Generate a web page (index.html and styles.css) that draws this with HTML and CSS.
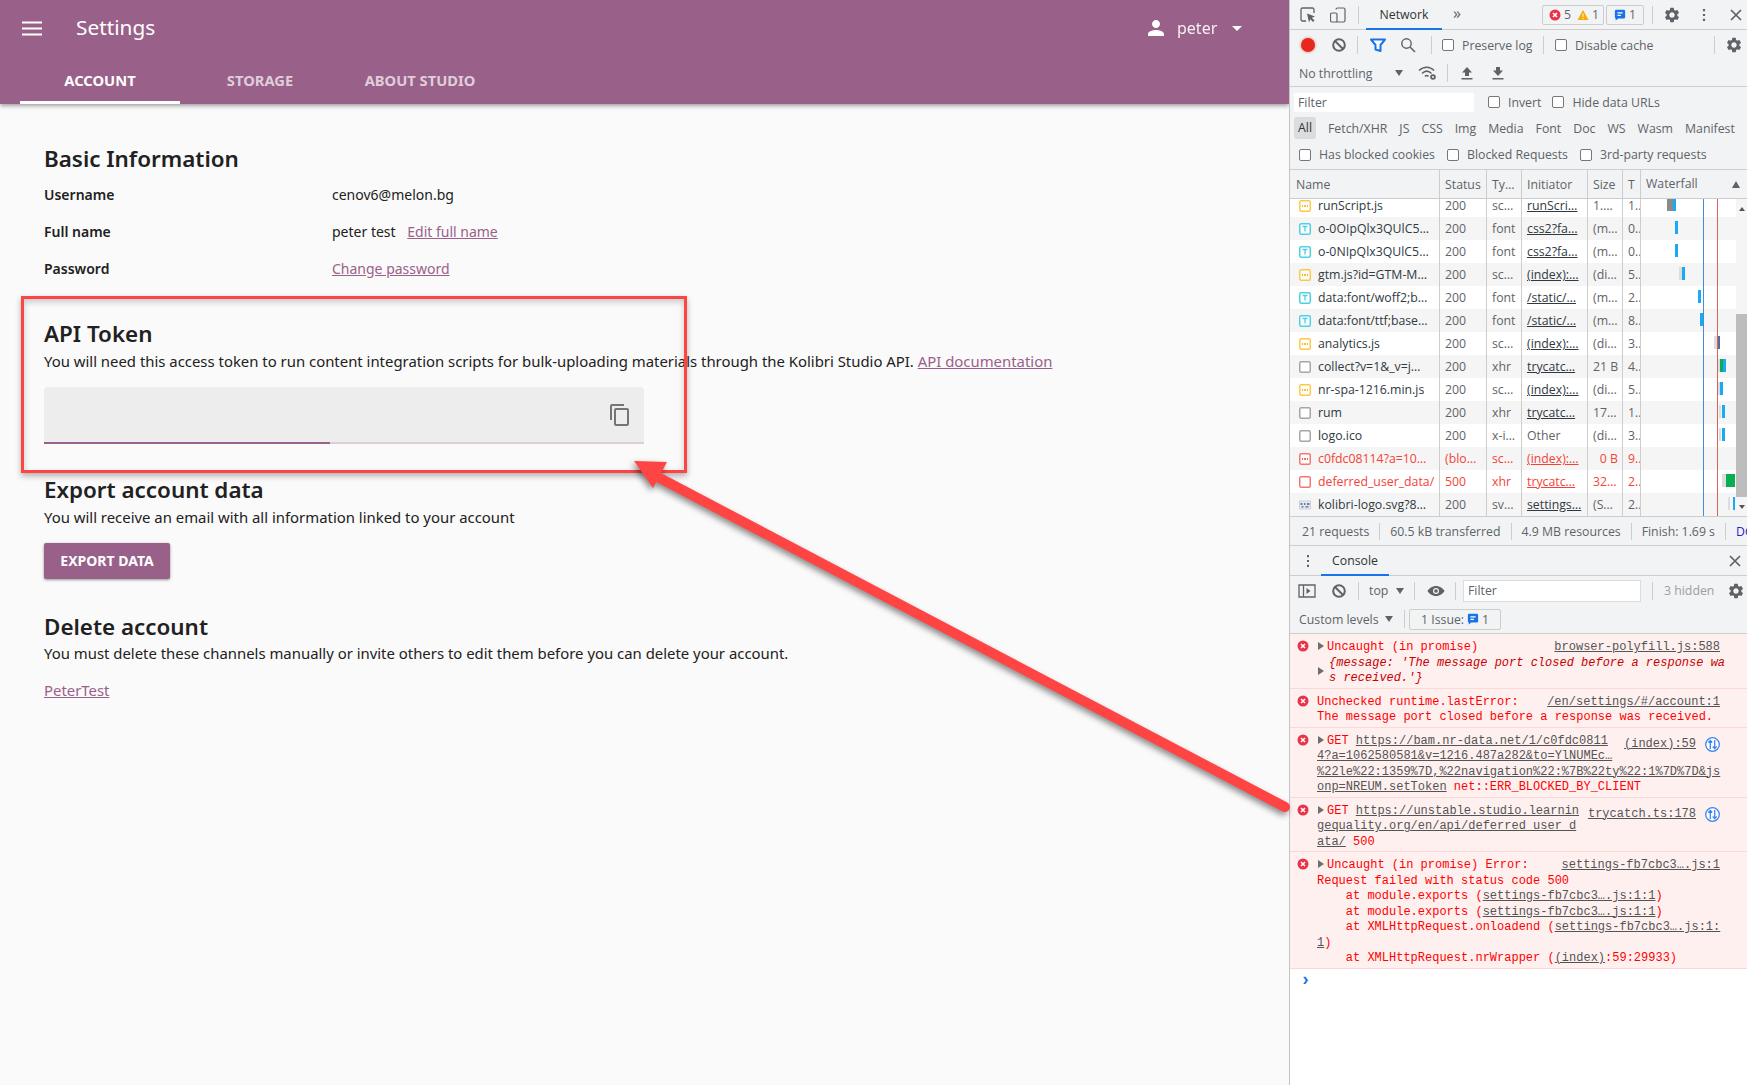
FILE: index.html
```html
<!DOCTYPE html>
<html lang="en">
<head>
    <meta charset="UTF-8">
    <meta name="viewport" content="width=device-width, initial-scale=1.0">
    <title>Settings</title>
    <link rel="stylesheet" href="styles.css">
</head>
<body>
    <svg class="defs" width="0" height="0">
        <symbol id="gear" viewBox="0 0 24 24"><path d="M19.14 12.94c.04-.3.06-.61.06-.94 0-.32-.02-.64-.07-.94l2.03-1.58c.18-.14.23-.41.12-.61l-1.92-3.32c-.12-.22-.37-.29-.59-.22l-2.39.96c-.5-.38-1.03-.7-1.62-.94l-.36-2.54c-.04-.24-.24-.41-.48-.41h-3.84c-.24 0-.43.17-.47.41l-.36 2.54c-.59.24-1.13.57-1.62.94l-2.39-.96c-.22-.08-.47 0-.59.22L2.74 8.87c-.12.21-.08.47.12.61l2.03 1.58c-.05.3-.09.63-.09.94s.02.64.07.94l-2.03 1.58c-.18.14-.23.41-.12.61l1.92 3.32c.12.22.37.29.59.22l2.39-.96c.5.38 1.03.7 1.62.94l.36 2.54c.05.24.24.41.48.41h3.84c.24 0 .44-.17.47-.41l.36-2.54c.59-.24 1.13-.56 1.62-.94l2.39.96c.22.08.47 0 .59-.22l1.92-3.32c.12-.22.07-.47-.12-.61l-2.01-1.58zM12 15.6c-1.98 0-3.6-1.62-3.6-3.6s1.62-3.6 3.6-3.6 3.6 1.62 3.6 3.6-1.62 3.6-3.6 3.6z"/></symbol>
        <symbol id="block" viewBox="0 0 16 16"><circle cx="8" cy="8" r="5.8" fill="none" stroke="currentColor" stroke-width="2"/><path d="M4 4l8 8" stroke="currentColor" stroke-width="2"/></symbol>
        <symbol id="err" viewBox="0 0 12 12"><circle cx="6" cy="6" r="5.5" fill="#e8344a"/><path d="M4 4l4 4M8 4l-4 4" stroke="#fff" stroke-width="1.5"/></symbol>
        <symbol id="msgicon" viewBox="0 0 14 14"><path d="M2.5 1h9A1.5 1.5 0 0 1 13 2.5v7a1.5 1.5 0 0 1-1.500 1.500H5l-3 2.500V11A1.500 1.500 0 0 1 1 9.500v-7A1.500 1.500 0 0 1 2.500 1z" fill="#1a73e8"/><path d="M4 4.500h6M4 7.500h4" stroke="#fff" stroke-width="1.300"/></symbol>
        <symbol id="font" viewBox="0 0 12 12"><rect x=".75" y=".75" width="10.500" height="10.500" rx="1.500" fill="#fff" stroke="#4dd0e8" stroke-width="1.500"/><path d="M3.500 3.500h5M6 3.500v5" stroke="#4dd0e8" stroke-width="1.300"/></symbol>
        <symbol id="script" viewBox="0 0 12 12"><rect x=".75" y=".75" width="10.500" height="10.500" rx="1.500" fill="#fff" stroke="#fbc944" stroke-width="1.500"/><path d="M3 7l1-1-1-1M9 7L8 6l1-1" fill="none" stroke="#f6a800" stroke-width=".9"/><circle cx="6" cy="6" r="1" fill="#f6a800"/></symbol>
        <symbol id="doc" viewBox="0 0 12 12"><rect x=".75" y=".75" width="10.500" height="10.500" rx="1.500" fill="#fff" stroke="#a3a6aa" stroke-width="1.500"/></symbol>
        <symbol id="script-red" viewBox="0 0 12 12"><rect x=".75" y=".75" width="10.500" height="10.500" rx="1.500" fill="#fff" stroke="#f7776c" stroke-width="1.500"/><path d="M3 7l1-1-1-1M9 7L8 6l1-1" fill="none" stroke="#ee4433" stroke-width=".9"/><circle cx="6" cy="6" r="1" fill="#ee4433"/></symbol>
        <symbol id="doc-red" viewBox="0 0 12 12"><rect x=".75" y=".75" width="10.500" height="10.500" rx="1.500" fill="#fff" stroke="#f7776c" stroke-width="1.500"/></symbol>
        <symbol id="image" viewBox="0 0 12 12"><rect x=".5" y="2" width="11" height="8" fill="#e4e8f0" stroke="#b9c0cc" stroke-width=".6"/><path d="M1.500 4h2v2h-2zM5 4h1.500v2H5zM8 4h2.500v2H8zM2.500 7h2v1.500h-2zM6.500 7h3v1.500h-3z" fill="#6f7f9d"/></symbol>
        <symbol id="net" viewBox="0 0 15 15"><circle cx="7.500" cy="7.500" r="6.800" fill="#fff" stroke="#3d86f0" stroke-width="1.300"/><path d="M5.300 12V3.500M3.300 5.500l2-2 2 2M9.700 3v8.500M7.700 9.500l2 2 2-2" fill="none" stroke="#3d86f0" stroke-width="1.300"/></symbol>
    </svg>

    <div class="screen">
        <div class="page">
            <header class="appbar">
                <div class="toolbar">
                    <svg class="hamburger" viewBox="0 0 20 15"><path d="M0 1.500h20M0 7.500h20M0 13.500h20" stroke="#fff" stroke-width="2"/></svg>
                    <span class="app-title">Settings</span>
                    <div class="user">
                        <svg class="user-icon" viewBox="0 0 24 24"><path d="M12 12c2.210 0 4-1.790 4-4s-1.790-4-4-4-4 1.790-4 4 1.790 4 4 4zm0 2c-2.670 0-8 1.340-8 4v2h16v-2c0-2.660-5.330-4-8-4z" fill="#fff"/></svg>
                        <span class="user-name">peter</span>
                        <span class="user-caret"></span>
                    </div>
                </div>
                <nav class="tabs">
                    <a class="tab tab-active">ACCOUNT</a>
                    <a class="tab">STORAGE</a>
                    <a class="tab">ABOUT STUDIO</a>
                </nav>
            </header>

            <main class="content">
                <h2 class="first-heading">Basic Information</h2>
                <div class="info-row first-row"><b>Username</b><span>cenov6@melon.bg</span></div>
                <div class="info-row"><b>Full name</b><span>peter test <a class="link edit-link">Edit full name</a></span></div>
                <div class="info-row"><b>Password</b><a class="link">Change password</a></div>

                <h2 class="api-heading">API Token</h2>
                <p>You will need this access token to run content integration scripts for bulk-uploading materials through the Kolibri Studio API. <a class="link">API documentation</a></p>
                <div class="token-field">
                    <svg class="copy-icon" viewBox="0 0 24 24"><path d="M16 1H4c-1.100 0-2 .9-2 2v14h2V3h12V1zm3 4H8c-1.100 0-2 .9-2 2v14c0 1.100.9 2 2 2h11c1.100 0 2-.9 2-2V7c0-1.100-.9-2-2-2zm0 16H8V7h11v14z" fill="#757575"/></svg>
                    <div class="token-progress"><div class="token-bar"></div></div>
                </div>

                <h2 class="export-heading">Export account data</h2>
                <p>You will receive an email with all information linked to your account</p>
                <button class="export-btn">EXPORT DATA</button>

                <h2 class="delete-heading">Delete account</h2>
                <p>You must delete these channels manually or invite others to edit them before you can delete your account.</p>
                <p class="channel"><a class="link">PeterTest</a></p>
            </main>
        </div>

        <aside class="devtools">
            <div class="dt-row dt-top">
                <svg class="ic16 ic-inspect" viewBox="0 0 16 16"><path d="M6 14H2.500A1.500 1.500 0 0 1 1 12.500v-10A1.500 1.500 0 0 1 2.500 1h10A1.500 1.500 0 0 1 14 2.500V6" fill="none" stroke="#5f6368" stroke-width="1.300"/><path d="M7 6.500l8 3-3.200 1.300 2.700 2.700-1.500 1.500-2.700-2.700L9 15.500z" fill="#5f6368"/></svg>
                <svg class="ic16 ic-device" viewBox="0 0 16 16"><path d="M6 2.500A1.500 1.500 0 0 1 7.500 1h6A1.500 1.500 0 0 1 15 2.500v11a1.500 1.500 0 0 1-1.500 1.500H2A1.500 1.500 0 0 1 .5 13.500v-6A1.500 1.500 0 0 1 2 6h3.500a1.500 1.500 0 0 1 1.500 1.500v6A1.500 1.500 0 0 1 5.500 15" fill="none" stroke="#5f6368" stroke-width="1.200"/></svg>
                <i class="sep sep-a"></i>
                <span class="dt-tab">Network</span>
                <span class="more">»</span>
                <span class="badge badge-err"><svg class="ic12" viewBox="0 0 12 12"><use href="#err"/></svg>5 <svg class="ic12 warn" viewBox="0 0 12 12"><path d="M6 1l5.500 10H.5z" fill="#f9ab00"/><path d="M6 4.500v3.500M6 9v1" stroke="#fff" stroke-width="1"/></svg>1</span>
                <span class="badge badge-msg"><svg class="ic12" viewBox="0 0 14 14"><use href="#msgicon"/></svg>1</span>
                <i class="sep sep-b"></i>
                <svg class="ic16 gear gear-top" viewBox="0 0 24 24"><use href="#gear"/></svg>
                <svg class="ic16 ic-dots" viewBox="0 0 16 16"><path d="M8 2v2.200M8 6.900v2.200M8 11.800V14" stroke="#5f6368" stroke-width="2.200"/></svg>
                <svg class="ic16 ic-close" viewBox="0 0 16 16"><path d="M3 3l10 10M13 3L3 13" stroke="#5f6368" stroke-width="1.700"/></svg>
            </div>

            <div class="dt-row dt-net1">
                <span class="record"></span>
                <svg class="ic16 ic-block" viewBox="0 0 16 16"><use href="#block"/></svg>
                <i class="sep sep-c"></i>
                <svg class="ic16 ic-filter" viewBox="0 0 16 16"><path d="M1 2.500h14L10.500 8v6l-5-1.500V8z" fill="#fff" stroke="#1a73e8" stroke-width="2" stroke-linejoin="round"/></svg>
                <svg class="ic16 ic-search" viewBox="0 0 16 16"><circle cx="6.500" cy="6.500" r="4.700" fill="none" stroke="#5f6368" stroke-width="1.400"/><path d="M10 10l5 5" stroke="#5f6368" stroke-width="1.600"/></svg>
                <i class="sep sep-d"></i>
                <label class="chk chk-preserve"><i></i>Preserve log</label>
                <i class="sep sep-e"></i>
                <label class="chk chk-cache"><i></i>Disable cache</label>
                <i class="sep sep-f"></i>
                <svg class="ic16 gear gear-net" viewBox="0 0 24 24"><use href="#gear"/></svg>
            </div>

            <div class="dt-row dt-net2">
                <span class="throttle">No throttling</span>
                <span class="tri tri-throttle"></span>
                <svg class="ic-wifi" viewBox="0 0 20 16"><path d="M1 5.500C5.500 1 12 1 16 5.500M4 8.500c3-3 6.500-3 9.500 0M7 11.500c1-1.200 2.500-1.200 3.500 0" fill="none" stroke="#5f6368" stroke-width="1.500"/><circle cx="15" cy="12" r="2.800" fill="#5f6368"/><circle cx="15" cy="12" r="1" fill="#f1f3f4"/></svg>
                <i class="sep sep-g"></i>
                <svg class="ic16 ic-up" viewBox="0 0 16 16"><path d="M8 2l5 5.500H10V11H6V7.500H3zM2.500 13h11v1.500h-11z" fill="#5f6368"/></svg>
                <svg class="ic16 ic-down" viewBox="0 0 16 16"><path d="M8 11L3 5.500h3V2h4v3.500h3zM2.500 13h11v1.500h-11z" fill="#5f6368"/></svg>
            </div>

            <div class="dt-filter">
                <div class="filter-row">
                    <span class="filter-input net-filter">Filter</span>
                    <label class="chk chk-invert"><i></i>Invert</label>
                    <label class="chk chk-hide"><i></i>Hide data URLs</label>
                </div>
                <div class="type-row">
                    <span class="type-all">All</span><span>Fetch/XHR</span><span>JS</span><span>CSS</span><span>Img</span><span>Media</span><span>Font</span><span>Doc</span><span>WS</span><span>Wasm</span><span>Manifest</span>
                </div>
                <div class="blocked-row">
                    <label class="chk"><i></i>Has blocked cookies</label>
                    <label class="chk"><i></i>Blocked Requests</label>
                    <label class="chk"><i></i>3rd-party requests</label>
                </div>
            </div>

            <div class="net-head net-cols">
                <span>Name</span><span>Status</span><span>Ty…</span><span>Initiator</span><span>Size</span><span>T</span>
                <span class="wf-head">Waterfall<i class="tri-up"></i></span>
            </div>

            <div class="net-table">
                <div class="net-rows">
                    <div class="net-row net-cols"><span><svg class="ric"><use href="#script"/></svg>runScript.js</span><span>200</span><span>sc…</span><u>runScri…</u><span>1….</span><span>1..</span><span class="wf"><i class="bar b-gray" style="left:26px;width:6px"></i><i class="bar b-blue" style="left:32px;width:3px"></i></span></div>
                    <div class="net-row net-cols"><span><svg class="ric"><use href="#font"/></svg>o-0OIpQlx3QUlC5…</span><span>200</span><span>font</span><u>css2?fa…</u><span>(m…</span><span>0..</span><span class="wf"><i class="bar b-blue" style="left:34px;width:3px"></i></span></div>
                    <div class="net-row net-cols"><span><svg class="ric"><use href="#font"/></svg>o-0NIpQlx3QUlC5…</span><span>200</span><span>font</span><u>css2?fa…</u><span>(m…</span><span>0..</span><span class="wf"><i class="bar b-blue" style="left:34px;width:3px"></i></span></div>
                    <div class="net-row net-cols"><span><svg class="ric"><use href="#script"/></svg>gtm.js?id=GTM-M…</span><span>200</span><span>sc…</span><u>(index):…</u><span>(di…</span><span>5..</span><span class="wf"><i class="bar b-light" style="left:38px;width:3px"></i><i class="bar b-blue" style="left:41px;width:3px"></i></span></div>
                    <div class="net-row net-cols"><span><svg class="ric"><use href="#font"/></svg>data:font/woff2;b…</span><span>200</span><span>font</span><u>/static/…</u><span>(m…</span><span>2..</span><span class="wf"><i class="bar b-blue" style="left:57px;width:3px"></i></span></div>
                    <div class="net-row net-cols"><span><svg class="ric"><use href="#font"/></svg>data:font/ttf;base…</span><span>200</span><span>font</span><u>/static/…</u><span>(m…</span><span>8..</span><span class="wf"><i class="bar b-blue" style="left:59px;width:3px"></i></span></div>
                    <div class="net-row net-cols"><span><svg class="ric"><use href="#script"/></svg>analytics.js</span><span>200</span><span>sc…</span><u>(index):…</u><span>(di…</span><span>3..</span><span class="wf"><i class="bar b-light" style="left:73px;width:4px"></i><i class="bar b-dark" style="left:77px;width:2px"></i></span></div>
                    <div class="net-row net-cols"><span><svg class="ric"><use href="#doc"/></svg>collect?v=1&amp;_v=j…</span><span>200</span><span>xhr</span><u>trycatc…</u><span>21 B</span><span>4..</span><span class="wf"><i class="bar b-light" style="left:76px;width:3px"></i><i class="bar b-green" style="left:79px;width:3px"></i><i class="bar b-blue" style="left:82px;width:3px"></i></span></div>
                    <div class="net-row net-cols"><span><svg class="ric"><use href="#script"/></svg>nr-spa-1216.min.js</span><span>200</span><span>sc…</span><u>(index):…</u><span>(di…</span><span>5..</span><span class="wf"><i class="bar b-light" style="left:76px;width:3px"></i><i class="bar b-blue" style="left:79px;width:3px"></i></span></div>
                    <div class="net-row net-cols"><span><svg class="ric"><use href="#doc"/></svg>rum</span><span>200</span><span>xhr</span><u>trycatc…</u><span>17…</span><span>1..</span><span class="wf"><i class="bar b-light" style="left:78px;width:2px"></i><i class="bar b-blue" style="left:81px;width:3px"></i></span></div>
                    <div class="net-row net-cols"><span><svg class="ric"><use href="#doc"/></svg>logo.ico</span><span>200</span><span>x-i…</span><span>Other</span><span>(di…</span><span>3..</span><span class="wf"><i class="bar b-light" style="left:78px;width:2px"></i><i class="bar b-blue" style="left:81px;width:3px"></i></span></div>
                    <div class="net-row net-cols net-err"><span><svg class="ric"><use href="#script-red"/></svg>c0fdc08114?a=10…</span><span>(blo…</span><span>sc…</span><u>(index):…</u><span class="size-right">0 B</span><span>9..</span><span class="wf"></span></div>
                    <div class="net-row net-cols net-err"><span><svg class="ric"><use href="#doc-red"/></svg>deferred_user_data/</span><span>500</span><span>xhr</span><u>trycatc…</u><span>32…</span><span>2..</span><span class="wf"><i class="bar b-light" style="left:81px;width:4px"></i><i class="bar b-green" style="left:85px;width:9px"></i></span></div>
                    <div class="net-row net-cols"><span><svg class="ric"><use href="#image"/></svg>kolibri-logo.svg?8…</span><span>200</span><span>sv…</span><u>settings…</u><span>(S…</span><span>2..</span><span class="wf"><i class="bar b-light" style="left:87px;width:2px"></i><i class="bar b-blue" style="left:92px;width:2px"></i></span></div>
                    <i class="wf-line wf-dom"></i>
                    <i class="wf-line wf-load"></i>
                </div>
                <div class="scrollbar">
                    <i class="sb-up"></i>
                    <div class="sb-thumb"></div>
                    <i class="sb-down"></i>
                </div>
            </div>

            <div class="net-foot">
                <span>21 requests</span><span>60.5 kB transferred</span><span>4.9 MB resources</span><span>Finish: 1.69 s</span><span class="dcl">DC</span>
            </div>

            <div class="dt-row console-tabs">
                <svg class="ic16 ic-cdots" viewBox="0 0 16 16"><path d="M8 2v2.200M8 6.900v2.200M8 11.800V14" stroke="#5f6368" stroke-width="2"/></svg>
                <span class="dt-tab console-tab">Console</span>
                <svg class="ic16 ic-cclose" viewBox="0 0 16 16"><path d="M3 3l10 10M13 3L3 13" stroke="#5f6368" stroke-width="1.700"/></svg>
            </div>
            <div class="dt-row console-bar1">
                <svg class="ic-sidebar" viewBox="0 0 18 16"><path d="M1 2h16v12H1zM5.500 2v12" fill="none" stroke="#5f6368" stroke-width="1.300"/><path d="M8.500 5l4 3-4 3z" fill="#5f6368"/></svg>
                <svg class="ic16 ic-block ic-cblock" viewBox="0 0 16 16"><use href="#block"/></svg>
                <i class="sep sep-h"></i>
                <span class="ctx">top</span><span class="tri tri-top"></span>
                <i class="sep sep-i"></i>
                <svg class="ic-eye" viewBox="0 0 18 12"><path d="M9 1C5 1 2 3.500 .5 6 2 8.500 5 11 9 11s7-2.500 8.500-5C16 3.500 13 1 9 1z" fill="#5f6368"/><circle cx="9" cy="6" r="3" fill="#f1f3f4"/><circle cx="9" cy="6" r="1.800" fill="#5f6368"/></svg>
                <i class="sep sep-j"></i>
                <span class="filter-input console-filter">Filter</span>
                <i class="sep sep-k"></i>
                <span class="hidden-count">3 hidden</span>
                <svg class="ic16 gear gear-console" viewBox="0 0 24 24"><use href="#gear"/></svg>
            </div>
            <div class="dt-row console-bar2">
                <span class="levels">Custom levels</span><span class="tri tri-levels"></span>
                <i class="sep sep-l"></i>
                <span class="badge issue-badge">1 Issue: <svg class="ic12" viewBox="0 0 14 14"><use href="#msgicon"/></svg>1</span>
            </div>

            <div class="console-log">
                <div class="msg">
                    <svg class="msg-icon"><use href="#err"/></svg>
                    <div class="msg-line"><span><i class="arrow"></i>Uncaught (in promise)</span><u class="src">browser-polyfill.js:588</u></div>
                    <div class="obj"><i class="arrow obj-arrow"></i><em>{message: 'The message port closed before a response wa<br>s received.'}</em></div>
                </div>
                <div class="msg">
                    <svg class="msg-icon"><use href="#err"/></svg>
                    <div class="msg-line"><span>Unchecked runtime.lastError:</span><u class="src">/en/settings/#/account:1</u></div>
                    <div>The message port closed before a response was received.</div>
                </div>
                <div class="msg">
                    <svg class="msg-icon"><use href="#err"/></svg>
                    <div class="msg-line"><span><i class="arrow"></i>GET <u>https://bam.nr-data.net/1/c0fdc0811</u></span><span class="src-net"><u class="src">(index):59</u><svg class="net-ic"><use href="#net"/></svg></span></div>
                    <div><u>4?a=1062580581&amp;v=1216.487a282&amp;to=YlNUMEc…</u></div>
                    <div><u>%22le%22:1359%7D,%22navigation%22:%7B%22ty%22:1%7D%7D&amp;js</u></div>
                    <div><u>onp=NREUM.setToken</u> net::ERR_BLOCKED_BY_CLIENT</div>
                </div>
                <div class="msg">
                    <svg class="msg-icon"><use href="#err"/></svg>
                    <div class="msg-line"><span><i class="arrow"></i>GET <u>https://unstable.studio.learnin</u></span><span class="src-net"><u class="src">trycatch.ts:178</u><svg class="net-ic"><use href="#net"/></svg></span></div>
                    <div><u>gequality.org/en/api/deferred_user_d</u></div>
                    <div><u>ata/</u> 500</div>
                </div>
                <div class="msg">
                    <svg class="msg-icon"><use href="#err"/></svg>
                    <div class="msg-line"><span><i class="arrow"></i>Uncaught (in promise) Error:</span><u class="src">settings-fb7cbc3….js:1</u></div>
                    <div>Request failed with status code 500</div>
                    <div>    at module.exports (<u>settings-fb7cbc3….js:1:1</u>)</div>
                    <div>    at module.exports (<u>settings-fb7cbc3….js:1:1</u>)</div>
                    <div>    at XMLHttpRequest.onloadend (<u>settings-fb7cbc3….js:1:</u></div>
                    <div><u>1</u>)</div>
                    <div>    at XMLHttpRequest.nrWrapper (<u>(index)</u>:59:29933)</div>
                </div>
                <div class="prompt">›</div>
            </div>
        </aside>

        <div class="callout-box"></div>
        <svg class="callout-arrow" viewBox="0 0 1747 1085">
            <path d="M1285 807L652 474" stroke="#ff4444" stroke-width="10" stroke-linecap="round"/>
            <path d="M634 461L667 462 653 488z" fill="#ff4444"/>
        </svg>
    </div>
</body>
</html>
```

FILE: styles.css
```css
* {
    box-sizing: border-box;
}

html, body {
    margin: 0;
    height: 100%;
}

body {
    font-family: "Noto Sans", sans-serif;
    font-size: 14px;
    color: #212121;
    background-color: #fafafa;
    overflow: hidden;
}

.defs {
    position: absolute;
}

.screen {
    position: relative;
    display: flex;
    width: 1747px;
    height: 1085px;
    overflow: hidden;
}

/* settings page */

.page {
    width: 1289px;
    flex: none;
}

.appbar {
    height: 104px;
    background-color: #996189;
    color: #fff;
    box-shadow: 0 2px 4px rgba(0, 0, 0, 0.35);
}

.toolbar {
    display: flex;
    align-items: center;
    height: 56px;
    padding-left: 22px;
}

.hamburger {
    width: 20px;
    height: 15px;
}

.app-title {
    font-size: 20.8px;
    line-height: 26px;
    margin-left: 34px;
    margin-bottom: 2px;
}

.user {
    display: flex;
    align-items: center;
    margin-left: auto;
    margin-right: 47px;
}

.user-icon {
    width: 24px;
    height: 24px;
}

.user-name {
    width: 40px;
    font-size: 16px;
    margin-left: 9px;
    opacity: 0.9;
}

.user-caret {
    margin-left: 15px;
    border-left: 5px solid transparent;
    border-right: 5px solid transparent;
    border-top: 5px solid #fff;
}

.tabs {
    display: flex;
    height: 48px;
    padding-left: 20px;
}

.tab {
    display: flex;
    align-items: center;
    justify-content: center;
    width: 160px;
    font-size: 14.7px;
    font-weight: 700;
    color: rgba(255, 255, 255, 0.7);
}

.tab-active {
    color: #fff;
    border-bottom: 3px solid #fff;
    padding-top: 3px;
}

.content {
    padding: 41px 0 0 44px;
}

h2 {
    font-size: 22.4px;
    font-weight: 600;
    line-height: 28px;
    margin: 0 0 2px;
}

p {
    font-size: 14.9px;
    line-height: 22px;
    margin: 0;
}

.link {
    color: #996189;
    text-decoration: underline;
}

.edit-link {
    margin-left: 8px;
}

.info-row {
    display: flex;
    align-items: center;
    height: 37px;
}

.info-row b {
    width: 288px;
    font-weight: 600;
}

.first-row {
    margin-top: 3px;
}

.api-heading {
    margin-top: 33px;
}

.token-field {
    position: relative;
    display: flex;
    justify-content: flex-end;
    width: 600px;
    height: 57px;
    margin-top: 15px;
    padding: 16px 12px 0 0;
    background-color: #ededed;
    border-radius: 4px 4px 0 0;
}

.copy-icon {
    width: 24px;
    height: 24px;
}

.token-progress {
    position: absolute;
    left: 0;
    right: 0;
    bottom: 0;
    height: 2px;
    background-color: #e0cdda;
}

.token-bar {
    width: 286px;
    height: 2px;
    background-color: #996189;
}

.export-heading {
    margin-top: 32px;
}

.export-heading + p {
    margin-top: 1px;
}

.export-btn {
    display: block;
    width: 126px;
    height: 36px;
    margin-top: 15px;
    padding: 0 0 2px;
    border: 0;
    border-radius: 2px;
    font-family: inherit;
    font-size: 14px;
    font-weight: 700;
    color: #fff;
    background-color: #996189;
    box-shadow: 0 1px 3px rgba(0, 0, 0, 0.4);
}

.delete-heading {
    margin: 34px 0 1px;
}

.channel {
    margin-top: 15px;
}

/* red annotation on top of the screenshot */

.callout-box {
    position: absolute;
    left: 21px;
    top: 296px;
    width: 666px;
    height: 177px;
    border: 3px solid #ff4444;
    box-shadow: 0 3px 6px rgba(0, 0, 0, 0.3), inset 0 3px 6px rgba(0, 0, 0, 0.2);
}

.callout-arrow {
    position: absolute;
    left: 0;
    top: 0;
    width: 1747px;
    height: 1085px;
    filter: drop-shadow(-2px 3px 3px rgba(0, 0, 0, 0.45));
}

/* devtools */

.devtools {
    width: 458px;
    flex: none;
    height: 1085px;
    border-left: 1px solid #c4c4c4;
    background-color: #fff;
    font-family: "Open Sans", sans-serif;
    font-size: 12.3px;
    color: #5f6368;
}

.dt-row {
    display: flex;
    align-items: center;
    background-color: #f1f3f4;
}

.dt-top {
    height: 30px;
    border-bottom: 1px solid #cdcdcd;
}

.dt-net1 {
    height: 30px;
}

.dt-net2 {
    height: 27px;
    border-bottom: 1px solid #cdcdcd;
}

.ic16 {
    width: 16px;
    height: 16px;
    flex: none;
    color: #5f6368;
}

.ic12 {
    width: 12px;
    height: 12px;
    flex: none;
}

.gear {
    fill: #5f6368;
}

.sep {
    width: 1px;
    height: 18px;
    flex: none;
    background-color: #cdcdcd;
}

.ic-inspect { margin-left: 10px; }
.ic-device { margin-left: 14px; }
.sep-a { margin-left: 12px; }

.dt-tab {
    display: flex;
    align-items: center;
    justify-content: center;
    align-self: stretch;
    width: 76px;
    margin-left: 7px;
    color: #333;
    border-bottom: 2px solid #1a73e8;
    margin-bottom: -1px;
}

.more {
    width: 12px;
    margin-left: 9px;
    margin-top: -4px;
    font-size: 16px;
    line-height: 14px;
    text-align: center;
}

.badge {
    display: flex;
    align-items: center;
    height: 20px;
    border: 1px solid #cdcdcd;
    border-radius: 2px;
    gap: 3px;
}

.badge-err {
    width: 62px;
    flex: none;
    margin-left: 79px;
    padding-left: 6px;
}

.warn {
    margin-left: 3px;
}

.badge-msg {
    width: 38px;
    flex: none;
    margin-left: 2px;
    padding-left: 7px;
}

.sep-b { margin-left: 8px; }
.gear-top { margin-left: 10px; width: 18px; height: 18px; }
.ic-dots { margin-left: 15px; }
.ic-close { margin-left: 16px; }

.record {
    width: 14px;
    height: 14px;
    margin-left: 11px;
    border-radius: 50%;
    background-color: #e5291e;
    box-shadow: 0 0 3px rgba(229, 41, 30, 0.6);
}

.ic-block { margin-left: 16px; }
.sep-c { margin-left: 10px; }
.ic-filter { margin-left: 12px; }
.ic-search { margin-left: 14px; }
.sep-d { margin-left: 15px; }

.chk {
    display: inline-flex;
    align-items: center;
    white-space: nowrap;
}

.chk i {
    width: 12px;
    height: 12px;
    margin-right: 8px;
    flex: none;
    background-color: #fff;
    border: 1px solid #767676;
    border-radius: 2px;
}

.chk-preserve { margin-left: 10px; width: 90px; }
.sep-e { margin-left: 11px; }
.chk-cache { margin-left: 11px; width: 99px; }
.sep-f { margin-left: 60px; }
.gear-net { margin-left: 10px; width: 18px; height: 18px; }

.throttle { margin-left: 9px; width: 75px; white-space: nowrap; }

.tri {
    width: 0;
    height: 0;
    flex: none;
    border-left: 4px solid transparent;
    border-right: 4px solid transparent;
    border-top: 6px solid #5f6368;
}

.tri-throttle { margin-left: 21px; }

.ic-wifi {
    width: 20px;
    height: 16px;
    margin-left: 15px;
}

.sep-g { margin-left: 9px; }
.ic-up { margin-left: 11px; }
.ic-down { margin-left: 15px; }

.dt-filter {
    background-color: #f1f3f4;
    height: 82px;
}

.filter-row {
    display: flex;
    align-items: center;
    height: 30px;
    padding-left: 4px;
}

.filter-input {
    display: flex;
    align-items: center;
    height: 19px;
    padding-left: 4px;
    background-color: #fff;
}

.net-filter {
    width: 180px;
}

.chk-invert { margin-left: 14px; }
.chk-hide { margin-left: 11px; }

.type-row {
    display: flex;
    align-items: center;
    gap: 12px;
    height: 22px;
    padding-left: 4px;
}

.type-all {
    height: 22px;
    width: 22px;
    line-height: 22px;
    text-align: center;
    border-radius: 3px;
    background-color: #dadce0;
    color: #333;
}

.blocked-row {
    display: flex;
    align-items: center;
    gap: 12px;
    height: 30px;
    padding: 1px 0 0 9px;
}

.net-cols {
    display: grid;
    grid-template-columns: 149px 47px 35px 66px 35px 18px 1fr;
}

.net-cols > * {
    overflow: hidden;
    white-space: nowrap;
    padding-left: 5px;
    border-left: 1px solid #cdcdcd;
}

.net-cols > :first-child {
    border-left: 0;
    padding-left: 9px;
}

.net-head {
    height: 30px;
    align-items: stretch;
    background-color: #f1f3f4;
    border-top: 1px solid #cdcdcd;
    border-bottom: 1px solid #cdcdcd;
    line-height: 30px;
}

.net-head > :first-child {
    padding-left: 6px;
}

.net-head > :nth-child(2) {
    clip-path: inset(0 5px 0 0);
}

.wf-head {
    display: flex;
    justify-content: space-between;
    align-items: center;
    padding-right: 7px;
}

.tri-up {
    width: 0;
    height: 0;
    border-left: 4px solid transparent;
    border-right: 4px solid transparent;
    border-bottom: 7px solid #5f6368;
}

.net-table {
    display: flex;
    height: 317px;
    overflow: hidden;
}

.net-rows {
    position: relative;
    flex: 1;
    margin-top: -5px;
}

.net-row {
    height: 23px;
    line-height: 24px;
    background-color: #fff;
}

.net-row:nth-child(even) {
    background-color: #f5f5f5;
}

.net-row > :first-child {
    display: flex;
    align-items: center;
    color: #303942;
}

.net-row u {
    color: #303942;
}

.ric {
    width: 12px;
    height: 12px;
    flex: none;
    margin-right: 7px;
}

.net-err > *,
.net-err u,
.net-err > :first-child {
    color: #f44336;
}

.size-right {
    text-align: right;
    padding-right: 4px;
}

.wf {
    position: relative;
}

.bar {
    position: absolute;
    top: 4px;
    height: 13px;
}

.b-blue { background-color: #1aa9f5; }
.b-gray { background-color: #8a8a8a; }
.b-light { background-color: #dddddd; }
.b-green { background-color: #0aad4f; }
.b-dark { background-color: #5a6b9b; }

.wf-line {
    position: absolute;
    top: 0;
    bottom: 0;
    width: 1px;
}

.wf-dom {
    left: 413px;
    background-color: #4a88d8;
}

.wf-load {
    left: 427px;
    background-color: #d9635b;
}

.scrollbar {
    display: flex;
    flex-direction: column;
    align-items: center;
    width: 11px;
    flex: none;
    background-color: #f5f5f5;
}

.sb-up {
    margin-top: 8px;
    border-left: 3px solid transparent;
    border-right: 3px solid transparent;
    border-bottom: 4px solid #555;
}

.sb-thumb {
    width: 11px;
    height: 183px;
    margin-top: 103px;
    background-color: #bdbdbd;
}

.sb-down {
    margin-top: 8px;
    border-left: 3px solid transparent;
    border-right: 3px solid transparent;
    border-top: 4px solid #555;
}

.net-foot {
    display: flex;
    align-items: center;
    height: 30px;
    padding: 1px 0 0 12px;
    background-color: #f1f3f4;
    border-top: 1px solid #cdcdcd;
    border-bottom: 1px solid #cdcdcd;
    overflow: hidden;
    white-space: nowrap;
}

.net-foot span + span {
    margin-left: 10px;
    padding-left: 10px;
    border-left: 1px solid #cdcdcd;
}

.net-foot .dcl {
    color: #2222cc;
}

.console-tabs {
    height: 30px;
    border-bottom: 1px solid #cdcdcd;
}

.ic-cdots { margin-left: 10px; }

.console-tab {
    width: 68px;
    margin-left: 5px;
}

.ic-cclose { margin-left: auto; margin-right: 4px; }

.console-bar1 {
    height: 29px;
}

.ic-sidebar {
    width: 18px;
    height: 16px;
    margin-left: 8px;
}

.ic-cblock { margin-left: 15px; }
.sep-h { margin-left: 11px; }

.ctx {
    width: 20px;
    margin-left: 10px;
    color: #5f6368;
}

.tri-top { margin-left: 7px; }
.sep-i { margin-left: 10px; }

.ic-eye {
    width: 18px;
    height: 12px;
    margin-left: 12px;
}

.sep-j { margin-left: 10px; }

.console-filter {
    width: 178px;
    height: 22px;
    margin-left: 7px;
    border: 1px solid #dadce0;
}

.sep-k { margin-left: 11px; }

.hidden-count {
    width: 50px;
    margin-left: 11px;
    color: #9aa0a6;
    white-space: nowrap;
}

.gear-console { margin-left: 13px; width: 18px; height: 18px; }

.console-bar2 {
    height: 29px;
    border-bottom: 1px solid #cdcdcd;
}

.levels { margin-left: 9px; width: 80px; white-space: nowrap; }
.tri-levels { margin-left: 6px; }
.sep-l { margin-left: 11px; }

.issue-badge {
    width: 92px;
    height: 21px;
    margin-left: 4px;
    padding-left: 11px;
}

.console-log {
    font-family: "Liberation Mono", monospace;
    font-size: 12px;
    line-height: 15.5px;
    color: #f00;
}

.msg {
    position: relative;
    padding: 6px 9px 1px 27px;
    background-color: #fff0f0;
    border-bottom: 1px solid #ffd6d6;
}

.msg > div {
    white-space: pre;
}

.msg u {
    color: #545454;
}

.msg-icon {
    position: absolute;
    left: 7px;
    top: 6px;
    width: 12px;
    height: 12px;
}

.msg-line {
    display: flex;
    justify-content: space-between;
    margin-right: 18px;
}

.src-net {
    display: flex;
    align-items: center;
    padding-top: 3px;
    margin-bottom: -3px;
}

.net-ic {
    width: 15px;
    height: 15px;
    margin-left: 9px;
}

.arrow {
    display: inline-block;
    width: 0;
    height: 0;
    margin-right: 3px;
    margin-left: 1px;
    border-top: 4px solid transparent;
    border-bottom: 4px solid transparent;
    border-left: 6px solid #6e6e6e;
}

.obj {
    position: relative;
    padding-left: 12px;
    color: #c80000;
}

.obj-arrow {
    position: absolute;
    left: 0;
    top: 11px;
}

.prompt {
    padding-left: 10px;
    font-size: 18px;
    line-height: 22px;
    font-weight: 700;
    color: #1a73e8;
}
```
